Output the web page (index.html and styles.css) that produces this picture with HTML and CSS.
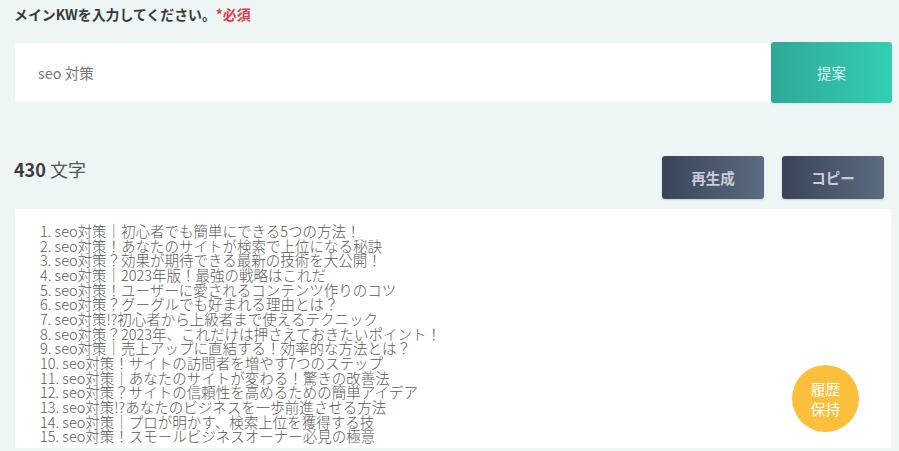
FILE: index.html
```html
<!DOCTYPE html>
<html lang="ja">
<head>
<meta charset="utf-8">
<link rel="stylesheet" href="styles.css">
</head>
<body>
<div class="page">
  <div class="label">メインKWを入力してください。<span class="req">*必須</span></div>
  <div class="search-row">
    <div class="input">seo 対策</div>
    <button class="btn-suggest">提案</button>
  </div>
  <div class="toolbar">
    <div class="count"><b>430</b> 文字</div>
    <div class="actions">
      <button class="btn-dark">再生成</button>
      <button class="btn-dark">コピー</button>
    </div>
  </div>
  <div class="result">
    <ol class="list">
      <li>1. seo対策｜初心者でも簡単にできる5つの方法！</li>
      <li>2. seo対策！あなたのサイトが検索で上位になる秘訣</li>
      <li>3. seo対策？効果が期待できる最新の技術を大公開！</li>
      <li>4. seo対策｜2023年版！最強の戦略はこれだ</li>
      <li>5. seo対策！ユーザーに愛されるコンテンツ作りのコツ</li>
      <li>6. seo対策？グーグルでも好まれる理由とは？</li>
      <li>7. seo対策!?初心者から上級者まで使えるテクニック</li>
      <li>8. seo対策？2023年、これだけは押さえておきたいポイント！</li>
      <li>9. seo対策｜売上アップに直結する！効率的な方法とは？</li>
      <li>10. seo対策！サイトの訪問者を増やす7つのステップ</li>
      <li>11. seo対策｜あなたのサイトが変わる！驚きの改善法</li>
      <li>12. seo対策？サイトの信頼性を高めるための簡単アイデア</li>
      <li>13. seo対策!?あなたのビジネスを一歩前進させる方法</li>
      <li>14. seo対策｜プロが明かす、検索上位を獲得する技</li>
      <li>15. seo対策！スモールビジネスオーナー必見の極意</li>
    </ol>
    <div class="history">履歴<br>保持</div>
  </div>
</div>
</body>
</html>
```

FILE: styles.css
```css
* { box-sizing: border-box; }
html, body { margin: 0; padding: 0; }
body {
  background: #eef5f5;
  font-family: "Noto Sans CJK JP", "Noto Sans", sans-serif;
  color: #444;
  width: 899px;
  height: 451px;
  overflow: hidden;
}
.page {
  padding: 4px 0 0 15px;
  width: 892px;
}
.label {
  font-size: 13.9px;
  font-weight: bold;
  color: #3a3a3a;
  line-height: 21px;
  margin-left: -1px;
}
.req { color: #d8404a; }
.search-row {
  display: flex;
  margin-top: 17px;
  height: 61px;
}
.input {
  flex: 1;
  background: #fff;
  margin-top: 1px;
  height: 59px;
  font-size: 14.5px;
  color: #777;
  padding-left: 23px;
  display: flex;
  align-items: center;
}
.btn-suggest {
  width: 121px;
  border: none;
  border-radius: 3px;
  background: linear-gradient(to right, #2ea897, #33ceb3);
  color: #d9f2ec;
  font-family: inherit;
  font-size: 14.5px;
  box-shadow: 0 1px 2px rgba(0,0,0,0.08);
}
.toolbar {
  display: flex;
  justify-content: space-between;
  align-items: flex-start;
  margin-top: 53px;
  height: 53px;
  padding-right: 8px;
}
.count {
  font-size: 18px;
  color: #555;
  line-height: 28px;
  margin-left: -1px;
  margin-top: -1px;
}
.count b { color: #3d3d3d; }
.actions { display: flex; gap: 18px; }
.btn-dark {
  width: 102px;
  height: 43px;
  border: none;
  border-radius: 3px;
  background: linear-gradient(to right, #394458, #5c6b81);
  color: #c9ced6;
  font-family: inherit;
  font-size: 14.5px;
  font-weight: bold;
  box-shadow: 0 1px 2px rgba(0,0,0,0.15);
}
.result {
  position: relative;
  background: #fff;
  width: 876px;
  height: 239px;
  padding: 15px 0 0 25px;
}
.list {
  list-style: none;
  margin: 0;
  padding: 0;
  font-size: 14.5px;
  line-height: 14.65px;
  color: #5a5a5a;
  font-weight: 300;
}
.history {
  position: absolute;
  left: 777px;
  top: 156px;
  width: 67px;
  height: 67px;
  border-radius: 50%;
  background: #fbbf3b;
  color: #fff;
  font-size: 15px;
  line-height: 20px;
  display: flex;
  align-items: center;
  justify-content: center;
  text-align: center;
}
```
